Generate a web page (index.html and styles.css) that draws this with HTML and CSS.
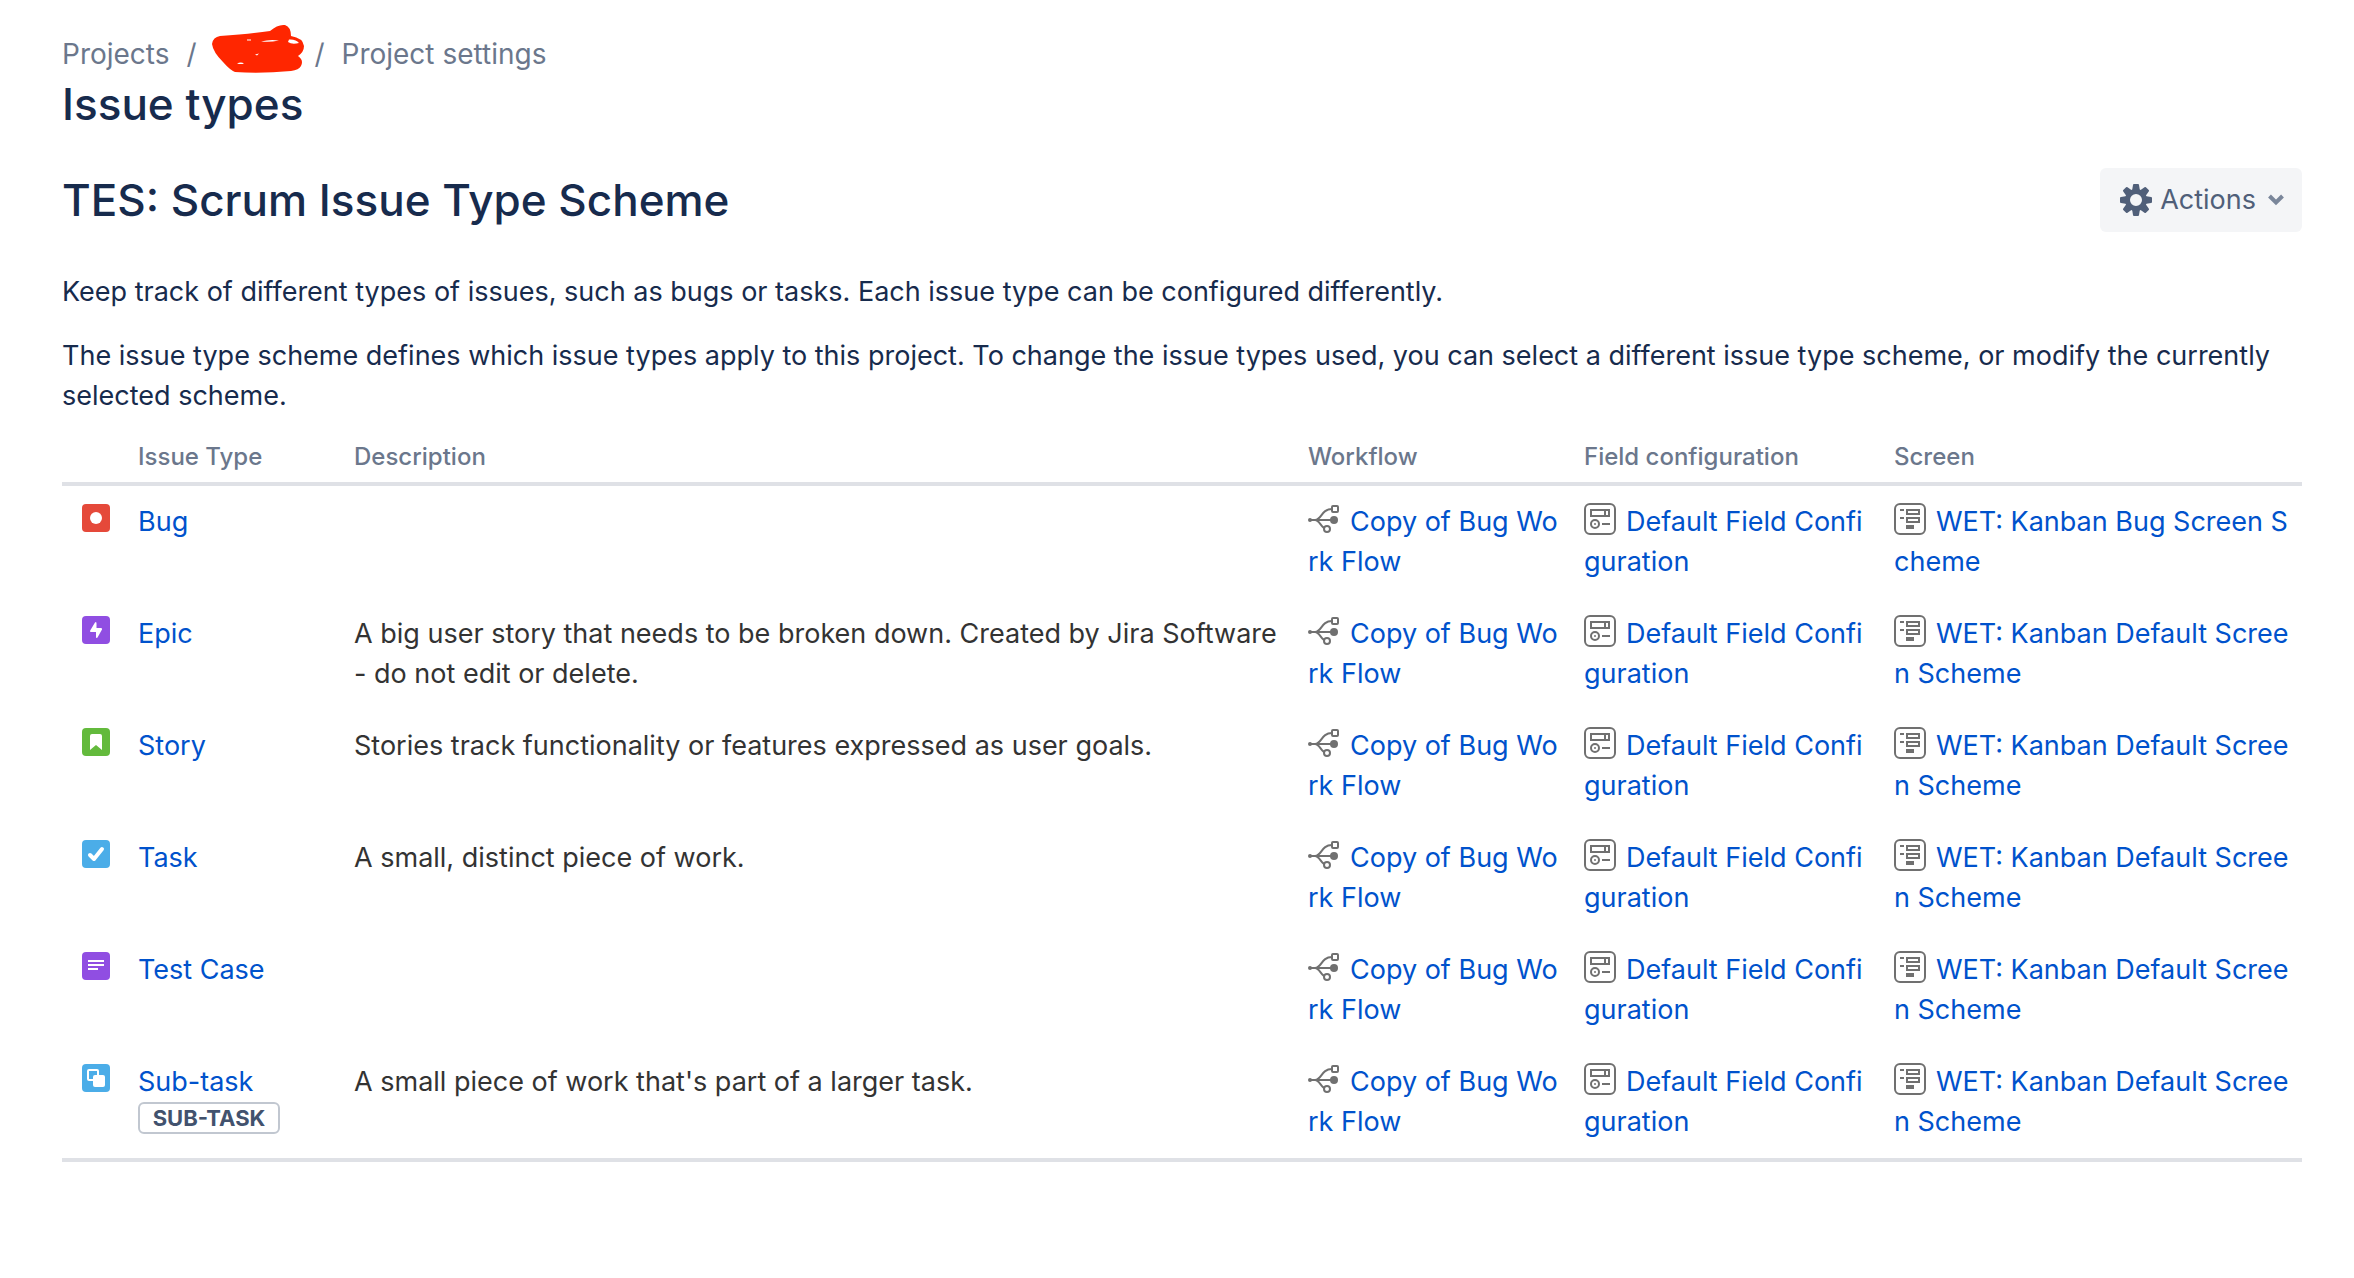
FILE: index.html
```html
<!DOCTYPE html>
<html lang="en">
<head>
<meta charset="utf-8">
<title>Issue types</title>
<link rel="stylesheet" href="styles.css">
</head>
<body>
<svg class="sprite" aria-hidden="true">
  <symbol id="workflow" viewBox="0 0 32 32">
    <g fill="none" stroke="#707070" stroke-width="2">
      <path d="M3 17h22M7 17C14 17 13 6 24 6M7 17c5 0 6 9 12 9"/>
      <rect x="24" y="3" width="6" height="6" rx="1" fill="#fff"/>
      <circle cx="19" cy="26" r="3" fill="#fff"/>
    </g>
    <circle cx="2" cy="17" r="2" fill="#707070"/>
    <circle cx="26" cy="17" r="4" fill="#707070"/>
  </symbol>
  <symbol id="field" viewBox="0 0 32 32">
    <g fill="none" stroke="#707070" stroke-width="2">
      <rect x="1" y="1" width="30" height="30" rx="5"/>
      <path d="M7 7h18v6H7zM21 7v6M18 21h8"/>
      <circle cx="11" cy="21" r="4"/>
    </g>
    <circle cx="11" cy="21" r="1" fill="#707070"/>
  </symbol>
  <symbol id="screen" viewBox="0 0 32 32">
    <g fill="none" stroke="#707070" stroke-width="2">
      <rect x="1" y="1" width="30" height="30" rx="5"/>
      <path d="M6 7h4M6 15h4M13 7h12v4H13zM13 15h12v4H13z"/>
    </g>
    <path d="M12 22h8v4h-8z" fill="#707070"/>
  </symbol>
</svg>
<main class="page">
  <nav class="breadcrumbs" aria-label="Breadcrumb">
    <a href="#">Projects</a>
    <span>/</span>
    <svg class="scribble" viewBox="0 0 92 50" role="img" aria-label="Hidden project name">
      <path fill="#ff2600" d="M0 20Q1 13 8 12Q38 10 58 7Q66 0 73 1Q79 3 79 12Q91 14 92 22Q92 28 86 32Q92 36 89 42Q87 46 79 47Q48 50 23 48Q18 46 11 38Q1 28 0 20z"/>
      <path fill="#fff" d="M49 17.500Q58 15 67 16.500Q58 18.500 49 17.500zM77 15.500Q84 15 87 19Q80 21 76 18zM25 39.500q4-2 7 0q-3 1-7 0zM43 30.500l4-1-2 2zM35 15.500h4v1h-4z"/>
    </svg>
    <span>/</span>
    <a href="#">Project settings</a>
  </nav>
  <h1>Issue types</h1>
  <header class="scheme">
    <h2>TES: Scrum Issue Type Scheme</h2>
    <button type="button" class="actions">
      <svg class="gear" viewBox="-16 -16 32 32" aria-hidden="true">
        <g fill="#505f79">
          <path id="tooth" d="M-3-15Q-3-16-2-16H2Q3-16 3-15L4-9H-4z"/>
          <use href="#tooth" transform="rotate(45)"/><use href="#tooth" transform="rotate(90)"/><use href="#tooth" transform="rotate(135)"/><use href="#tooth" transform="rotate(180)"/><use href="#tooth" transform="rotate(225)"/><use href="#tooth" transform="rotate(270)"/><use href="#tooth" transform="rotate(315)"/>
        </g>
        <circle r="8.5" fill="none" stroke="#505f79" stroke-width="5"/>
      </svg>
      Actions
      <svg class="chevron" viewBox="0 0 16 12" aria-hidden="true"><path d="M1.500 2L8 8.500L14.500 2" fill="none" stroke="#7a869a" stroke-width="4"/></svg>
    </button>
  </header>
  <p>Keep track of different types of issues, such as bugs or tasks. Each issue type can be configured differently.</p>
  <p>The issue type scheme defines which issue types apply to this project. To change the issue types used, you can select a different issue type scheme, or modify the currently selected scheme.</p>
  <table>
    <colgroup><col class="c-icon"><col class="c-type"><col><col class="c-flow"><col class="c-field"><col class="c-screen"></colgroup>
    <thead>
      <tr><td></td><th scope="col">Issue Type</th><th scope="col">Description</th><th scope="col">Workflow</th><th scope="col">Field configuration</th><th scope="col">Screen</th></tr>
    </thead>
    <tbody>
      <tr>
        <td class="icon"><svg viewBox="0 0 28 28" aria-hidden="true"><rect width="28" height="28" rx="4" fill="#e5493a"/><circle cx="14" cy="14" r="6" fill="#fff"/></svg></td>
        <td><a href="#">Bug</a></td>
        <td></td>
        <td class="ref"><svg aria-hidden="true"><use href="#workflow"/></svg><a href="#">Copy of Bug Work Flow</a></td>
        <td class="ref"><svg aria-hidden="true"><use href="#field"/></svg><a href="#">Default Field Configuration</a></td>
        <td class="ref"><svg aria-hidden="true"><use href="#screen"/></svg><a href="#">WET: Kanban Bug Screen Scheme</a></td>
      </tr>
      <tr>
        <td class="icon"><svg viewBox="0 0 28 28" aria-hidden="true"><rect width="28" height="28" rx="4" fill="#904ee2"/><path d="M13 6.500Q14.500 5 14.500 7.500V12H19Q20.500 12 20 13.500L15.500 21.500Q14 23 14 20.500V16H9Q7.500 16 8.200 14.500z" fill="#fff"/></svg></td>
        <td><a href="#">Epic</a></td>
        <td>A big user story that needs to be broken down. Created by Jira Software - do not edit or delete.</td>
        <td class="ref"><svg aria-hidden="true"><use href="#workflow"/></svg><a href="#">Copy of Bug Work Flow</a></td>
        <td class="ref"><svg aria-hidden="true"><use href="#field"/></svg><a href="#">Default Field Configuration</a></td>
        <td class="ref"><svg aria-hidden="true"><use href="#screen"/></svg><a href="#">WET: Kanban Default Screen Scheme</a></td>
      </tr>
      <tr>
        <td class="icon"><svg viewBox="0 0 28 28" aria-hidden="true"><rect width="28" height="28" rx="4" fill="#63ba3c"/><path d="M8 8Q8 6 10 6H18Q20 6 20 8V22L14 17L8 22z" fill="#fff"/></svg></td>
        <td><a href="#">Story</a></td>
        <td>Stories track functionality or features expressed as user goals.</td>
        <td class="ref"><svg aria-hidden="true"><use href="#workflow"/></svg><a href="#">Copy of Bug Work Flow</a></td>
        <td class="ref"><svg aria-hidden="true"><use href="#field"/></svg><a href="#">Default Field Configuration</a></td>
        <td class="ref"><svg aria-hidden="true"><use href="#screen"/></svg><a href="#">WET: Kanban Default Screen Scheme</a></td>
      </tr>
      <tr>
        <td class="icon"><svg viewBox="0 0 28 28" aria-hidden="true"><rect width="28" height="28" rx="4" fill="#4bade8"/><path d="M8 15l4 4L20 9" fill="none" stroke="#fff" stroke-width="4" stroke-linecap="round" stroke-linejoin="round"/></svg></td>
        <td><a href="#">Task</a></td>
        <td>A small, distinct piece of work.</td>
        <td class="ref"><svg aria-hidden="true"><use href="#workflow"/></svg><a href="#">Copy of Bug Work Flow</a></td>
        <td class="ref"><svg aria-hidden="true"><use href="#field"/></svg><a href="#">Default Field Configuration</a></td>
        <td class="ref"><svg aria-hidden="true"><use href="#screen"/></svg><a href="#">WET: Kanban Default Screen Scheme</a></td>
      </tr>
      <tr>
        <td class="icon"><svg viewBox="0 0 28 28" aria-hidden="true"><rect width="28" height="28" rx="4" fill="#904ee2"/><path d="M6 9h16M6 13h16M6 17h10" stroke="#fff" stroke-width="2"/></svg></td>
        <td><a href="#">Test Case</a></td>
        <td></td>
        <td class="ref"><svg aria-hidden="true"><use href="#workflow"/></svg><a href="#">Copy of Bug Work Flow</a></td>
        <td class="ref"><svg aria-hidden="true"><use href="#field"/></svg><a href="#">Default Field Configuration</a></td>
        <td class="ref"><svg aria-hidden="true"><use href="#screen"/></svg><a href="#">WET: Kanban Default Screen Scheme</a></td>
      </tr>
      <tr>
        <td class="icon"><svg viewBox="0 0 28 28" aria-hidden="true"><rect width="28" height="28" rx="4" fill="#4bade8"/><rect x="6" y="6" width="10" height="10" rx="1" fill="none" stroke="#fff" stroke-width="2"/><rect x="11" y="11" width="12" height="12" rx="2" fill="#fff"/></svg></td>
        <td><a href="#">Sub-task</a><span class="lozenge">SUB-TASK</span></td>
        <td>A small piece of work that's part of a larger task.</td>
        <td class="ref"><svg aria-hidden="true"><use href="#workflow"/></svg><a href="#">Copy of Bug Work Flow</a></td>
        <td class="ref"><svg aria-hidden="true"><use href="#field"/></svg><a href="#">Default Field Configuration</a></td>
        <td class="ref"><svg aria-hidden="true"><use href="#screen"/></svg><a href="#">WET: Kanban Default Screen Scheme</a></td>
      </tr>
    </tbody>
  </table>
</main>
</body>
</html>
```
FILE: styles.css
```css
* { box-sizing: border-box; }
body {
  margin: 0;
  background: #fff;
  color: #172b4d;
  font: 27px/40px Inter, "Liberation Sans", sans-serif;
}
.sprite { position: absolute; width: 0; height: 0; }
.page { padding: 24px 52px 0 62px; }
a { color: #0052cc; text-decoration: none; }

.breadcrumbs { display: flex; align-items: center; gap: 16px; height: 50px; font-size: 28px; }
.breadcrumbs a, .breadcrumbs span { padding-top: 10px; color: #6b778c; }
.breadcrumbs span { width: 12px; text-align: center; }
.scribble { width: 92px; height: 50px; margin: 0 -6px 0 -2px; }

h1, h2 { margin: 0; font-size: 44px; font-weight: 500; line-height: 56px; }
h1 { padding-top: 2px; }
.scheme { display: flex; align-items: center; justify-content: space-between; margin: 36px 0 40px; height: 64px; }
.actions {
  display: flex; align-items: center; gap: 8px;
  height: 64px; padding: 0 18px 0 20px;
  border: 0; border-radius: 6px;
  background: #f4f5f7; color: #505f79; font: inherit;
}
.gear { width: 32px; height: 32px; }
.chevron { width: 16px; height: 12px; margin-left: 4px; }

p { margin: 0 0 24px; }

table { width: 100%; table-layout: fixed; border-collapse: separate; border-spacing: 0; border-bottom: 4px solid #dfe1e6; }
.c-icon { width: 60px; }
.c-type { width: 216px; }
.c-flow { width: 276px; }
.c-field { width: 310px; }
.c-screen { width: 424px; }
th { padding: 0 0 8px 16px; text-align: left; font-size: 24px; font-weight: 500; line-height: 34px; color: #6b778c; }
thead th, thead td { border-bottom: 4px solid #dfe1e6; }
tbody { color: #333; }
tbody td { height: 112px; padding: 16px 4px 16px 16px; vertical-align: top; }
tbody .icon { padding: 18px 0 0 20px; }
.icon svg { display: block; width: 28px; height: 28px; }
.ref { word-break: break-all; }
.ref svg { width: 32px; height: 32px; margin-right: 10px; vertical-align: -4px; }
.lozenge {
  display: block; width: 142px; height: 32px;
  border: 2px solid #c1c7d0; border-radius: 6px;
  color: #42526e; font-size: 22px; font-weight: 700; line-height: 28px; text-align: center;
}
```
